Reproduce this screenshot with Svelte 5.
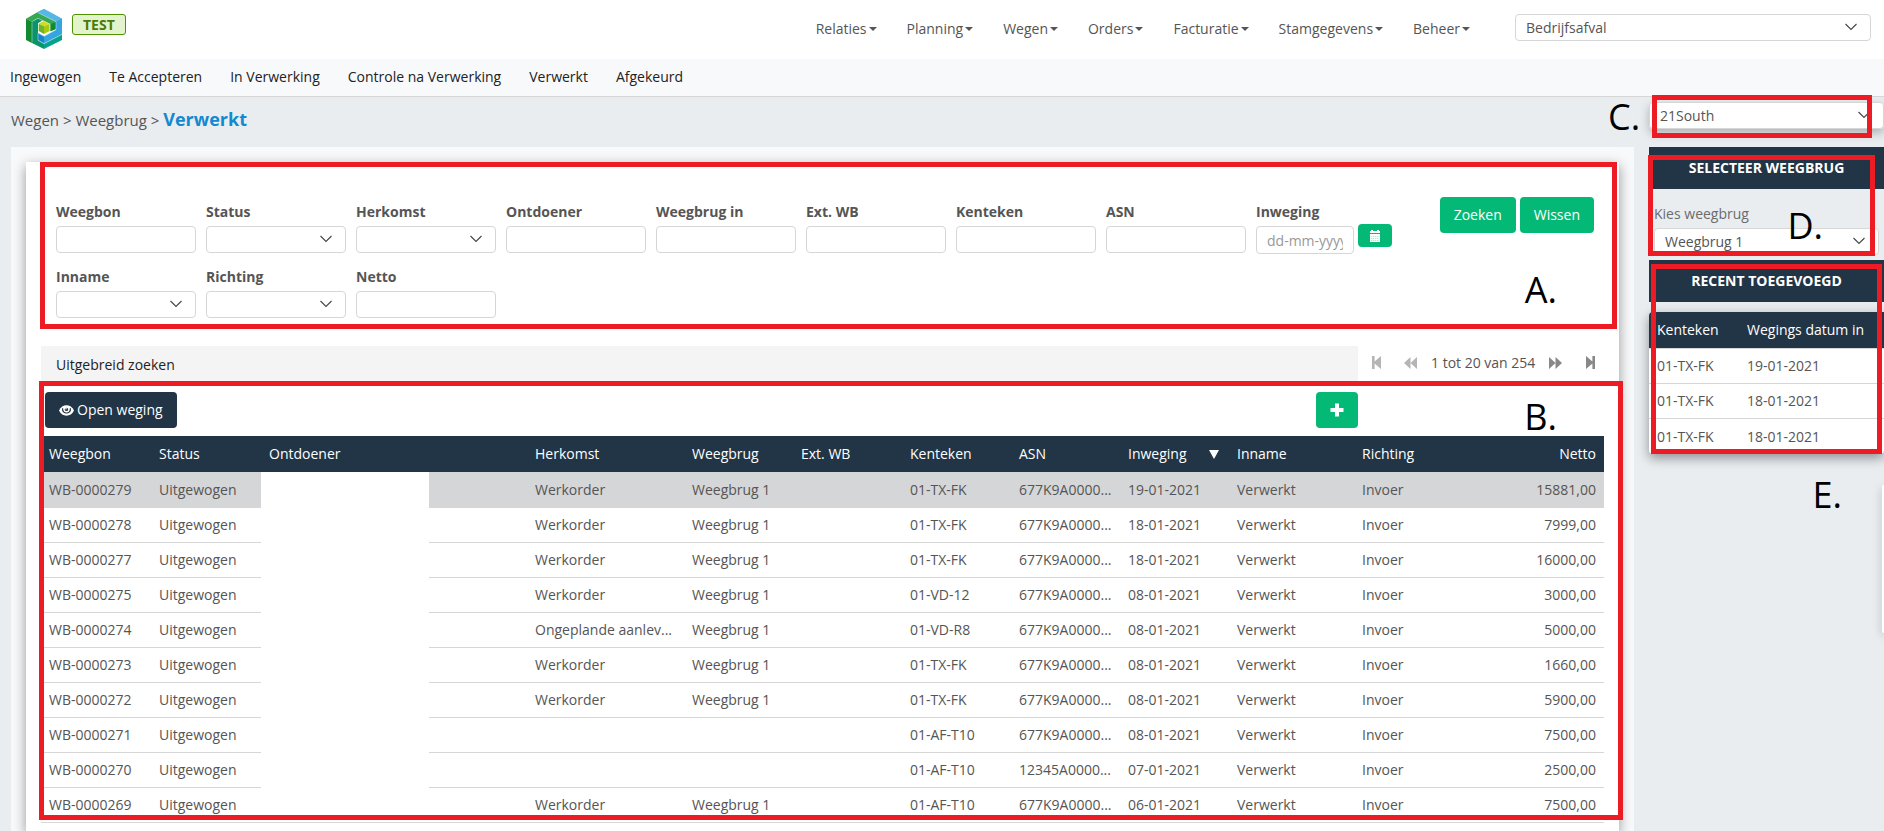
<script lang="ts">
	type Weging = {
		bon: string;
		herkomst: string;
		weegbrug: string;
		kenteken: string;
		asn: string;
		datum: string;
		netto: string;
	};

	type Filter = { id: string; label: string; kind: 'text' | 'select' | 'date' };

	const menu = ['Relaties', 'Planning', 'Wegen', 'Orders', 'Facturatie', 'Stamgegevens', 'Beheer'];

	const tabs = [
		'Ingewogen',
		'Te Accepteren',
		'In Verwerking',
		'Controle na Verwerking',
		'Verwerkt',
		'Afgekeurd'
	];

	const filters: Filter[] = [
		{ id: 'weegbon', label: 'Weegbon', kind: 'text' },
		{ id: 'status', label: 'Status', kind: 'select' },
		{ id: 'herkomst', label: 'Herkomst', kind: 'select' },
		{ id: 'ontdoener', label: 'Ontdoener', kind: 'text' },
		{ id: 'weegbrug-in', label: 'Weegbrug in', kind: 'text' },
		{ id: 'ext-wb', label: 'Ext. WB', kind: 'text' },
		{ id: 'kenteken', label: 'Kenteken', kind: 'text' },
		{ id: 'asn', label: 'ASN', kind: 'text' },
		{ id: 'inweging', label: 'Inweging', kind: 'date' },
		{ id: 'inname', label: 'Inname', kind: 'select' },
		{ id: 'richting', label: 'Richting', kind: 'select' },
		{ id: 'netto', label: 'Netto', kind: 'text' }
	];

	function weging(
		nr: number,
		herkomst: string,
		kenteken: string,
		datum: string,
		netto: string,
		asn = '677K9A0000...'
	): Weging {
		return {
			bon: `WB-0000${nr}`,
			herkomst,
			weegbrug: herkomst ? 'Weegbrug 1' : '',
			kenteken,
			asn,
			datum,
			netto
		};
	}

	const wegingen = [
		weging(279, 'Werkorder', '01-TX-FK', '19-01-2021', '15881,00'),
		weging(278, 'Werkorder', '01-TX-FK', '18-01-2021', '7999,00'),
		weging(277, 'Werkorder', '01-TX-FK', '18-01-2021', '16000,00'),
		weging(275, 'Werkorder', '01-VD-12', '08-01-2021', '3000,00'),
		weging(274, 'Ongeplande aanlev...', '01-VD-R8', '08-01-2021', '5000,00'),
		weging(273, 'Werkorder', '01-TX-FK', '08-01-2021', '1660,00'),
		weging(272, 'Werkorder', '01-TX-FK', '08-01-2021', '5900,00'),
		weging(271, '', '01-AF-T10', '08-01-2021', '7500,00'),
		weging(270, '', '01-AF-T10', '07-01-2021', '2500,00', '12345A0000...'),
		weging(269, 'Werkorder', '01-AF-T10', '06-01-2021', '7500,00')
	];

	const recent = [
		{ kenteken: '01-TX-FK', datum: '19-01-2021' },
		{ kenteken: '01-TX-FK', datum: '18-01-2021' },
		{ kenteken: '01-TX-FK', datum: '18-01-2021' }
	];

	let selected = $state('WB-0000279');
</script>

{#snippet chevron()}
	<svg class="chevron" width="12" height="8" viewBox="0 0 12 8" aria-hidden="true">
		<path d="M0.5 1 L6 6.5 L11.5 1" fill="none" stroke="#444" stroke-width="1.1" />
	</svg>
{/snippet}

<div class="page">
	<header class="topbar">
		<svg class="logo" width="36" height="40" viewBox="0 0 108 120" role="img" aria-label="Logo">
			<path d="M54 0 L108 29 V76 L54 104 L36 94 V72 L54 82 L90 62 V38 L34 10 Z" fill="#35a5e0" />
			<path d="M54 0 L108 29 L90 38 L34 10 Z" fill="#55b7e6" />
			<path d="M0 29 L34 10 L90 38 V60 L73 67 V46 L36 27 L18 38 Z" fill="#36a852" />
			<path d="M73 46 L90 38 V60 L73 67 Z" fill="#138a2e" />
			<path d="M0 29 L18 38 V102 L0 93 Z" fill="#138a2e" />
			<path d="M18 38 L36 27 L50 34 L36 43 V94 L54 104 V120 L18 102 Z" fill="#0a9468" />
			<path d="M54 104 L108 76 V93 L54 120 Z" fill="#07a28c" />
			<path d="M36 72 L54 82 V102 L36 92 Z" fill="#1682d0" />
			<path d="M38 44 L54 35 L71 44 L54 52 Z" fill="#d3dc1c" />
			<path d="M38 44 L54 52 V75 L38 66 Z" fill="#6fb52c" />
			<path d="M54 52 L71 44 V66 L54 75 Z" fill="#a9c90e" />
			<path
				d="M18 40 V100 M20 37 L36 28 L72 46 V67 M36 11 L90 38 V62 L54 82 L36 72 V94 L54 104 L108 76"
				fill="none"
				stroke="#dff2ea"
				stroke-opacity="0.7"
				stroke-width="2"
			/>
		</svg>
		<span class="env">TEST</span>
		<nav class="menu">
			{#each menu as item (item)}
				<button type="button">{item}<i class="caret"></i></button>
			{/each}
		</nav>
		<div class="select company">
			<select aria-label="Bedrijfsonderdeel">
				<option>Bedrijfsafval</option>
			</select>
			{@render chevron()}
		</div>
	</header>

	<nav class="tabs">
		{#each tabs as tab (tab)}
			<a href="#{tab.toLowerCase().replaceAll(' ', '-')}">{tab}</a>
		{/each}
	</nav>

	<div class="layout">
		<main>
			<div class="crumbs">Wegen &gt; Weegbrug &gt; <strong>Verwerkt</strong></div>
			<div class="panel">
				<section class="card">
					<form class="filters" onsubmit={(e) => e.preventDefault()}>
						<div class="fields">
							{#each filters as filter (filter.id)}
								<div class="field">
									<label for={filter.id}>{filter.label}</label>
									{#if filter.kind === 'select'}
										<div class="select">
											<select id={filter.id}><option></option></select>
											{@render chevron()}
										</div>
									{:else if filter.kind === 'date'}
										<div class="date">
											<input id={filter.id} type="text" placeholder="dd-mm-yyyy" />
											<button type="button" class="green calendar" aria-label="Kalender">
												<svg width="12" height="12" viewBox="0 0 12 12">
													<path
														d="M1 1 H2 V0 H4 V1 H8 V0 H10 V1 H11 V3 H1 Z M1 4 H11 V12 H1 Z"
														fill="#fff"
													/>
													<path
														d="M2 6.5 H10 M2 8.5 H10 M2 10.5 H10"
														stroke="#8fdcbe"
														stroke-width="0.7"
														stroke-dasharray="1.4 0.6"
													/>
												</svg>
											</button>
										</div>
									{:else}
										<input id={filter.id} type="text" />
									{/if}
								</div>
							{/each}
						</div>
						<div class="submit">
							<button type="submit" class="btn green">Zoeken</button>
							<button type="reset" class="btn green">Wissen</button>
						</div>
					</form>

					<div class="extra">
						<button type="button" class="extended">Uitgebreid zoeken</button>
						<div class="pager">
							<button type="button" class="off far" aria-label="Eerste">
								<svg width="9" height="13" viewBox="0 0 9 13">
									<path d="M0 0 H2.6 V5.6 L9 0 V13 L2.6 7.4 V13 H0 Z" />
								</svg>
							</button>
							<button type="button" class="off" aria-label="Vorige">
								<svg width="13" height="12" viewBox="0 0 13 12">
									<path d="M6.5 0 V12 L0 6 Z M13 0 V12 L6.5 6 Z" />
								</svg>
							</button>
							<span>1 tot 20 van 254</span>
							<button type="button" aria-label="Volgende">
								<svg width="13" height="12" viewBox="0 0 13 12">
									<path d="M0 0 L6.5 6 L0 12 Z M6.5 0 L13 6 L6.5 12 Z" />
								</svg>
							</button>
							<button type="button" class="last" aria-label="Laatste">
								<svg width="9" height="13" viewBox="0 0 9 13">
									<path d="M9 0 H6.4 V5.6 L0 0 V13 L6.4 7.4 V13 H9 Z" />
								</svg>
							</button>
						</div>
					</div>

					<div class="toolbar">
						<button type="button" class="btn dark">
							<svg width="15" height="11" viewBox="0 0 15 11" aria-hidden="true">
								<path
									d="M0 5.5 C3 -1.4 12 -1.4 15 5.5 C12 12.4 3 12.4 0 5.5 Z"
									fill="#fff"
								/>
								<path
									d="M3.6 3.2 C2.8 9.6 12.2 9.6 11.4 3.2"
									fill="none"
									stroke="#213546"
									stroke-width="1.2"
								/>
								<circle cx="7.5" cy="4.4" r="1.7" fill="#213546" />
								<circle cx="7" cy="3.8" r="0.8" fill="#fff" />
							</svg>
							Open weging
						</button>
						<button type="button" class="btn green plus" aria-label="Toevoegen">
							<svg width="14" height="14" viewBox="0 0 14 14">
								<path d="M7 0.5 V13.5 M0.5 7 H13.5" stroke="#fff" stroke-width="4" />
							</svg>
						</button>
					</div>

					<div class="table-wrap">
						<table class="wegingen">
							<colgroup>
								<col class="w-bon" />
								<col class="w-bon" />
								<col class="w-ontdoener" />
								<col class="w-herkomst" />
								<col class="w-std" />
								<col class="w-std" />
								<col class="w-std" />
								<col class="w-std" />
								<col class="w-std" />
								<col class="w-inname" />
								<col />
							</colgroup>
							<thead>
								<tr>
									<th>Weegbon</th>
									<th>Status</th>
									<th>Ontdoener</th>
									<th>Herkomst</th>
									<th>Weegbrug</th>
									<th>Ext. WB</th>
									<th>Kenteken</th>
									<th>ASN</th>
									<th><span class="sorted">Inweging <i class="desc"></i></span></th>
									<th>Inname</th>
									<th class="split"><span>Richting</span><span>Netto</span></th>
								</tr>
							</thead>
							<tbody>
								{#each wegingen as row (row.bon)}
									<tr class:selected={row.bon === selected} onclick={() => (selected = row.bon)}>
										<td>{row.bon}</td>
										<td>Uitgewogen</td>
										<td></td>
										<td>{row.herkomst}</td>
										<td>{row.weegbrug}</td>
										<td></td>
										<td>{row.kenteken}</td>
										<td>{row.asn}</td>
										<td>{row.datum}</td>
										<td>Verwerkt</td>
										<td class="split"><span>Invoer</span><span>{row.netto}</span></td>
									</tr>
								{/each}
							</tbody>
						</table>
						<div class="blank"></div>
					</div>
				</section>
			</div>
			<div class="mark mark-a"><b>A.</b></div>
			<div class="mark mark-b"><b>B.</b></div>
		</main>

		<aside>
			<div class="select location">
				<select aria-label="Locatie">
					<option>21South</option>
				</select>
				{@render chevron()}
			</div>

			<h2>SELECTEER WEEGBRUG</h2>
			<div class="bridge">
				<label for="weegbrug">Kies weegbrug</label>
				<div class="select">
					<select id="weegbrug">
						<option>Weegbrug 1</option>
					</select>
					{@render chevron()}
				</div>
			</div>

			<h2>RECENT TOEGEVOEGD</h2>
			<table class="recent">
				<thead>
					<tr>
						<th>Kenteken</th>
						<th>Wegings datum in</th>
					</tr>
				</thead>
				<tbody>
					{#each recent as row, i (i)}
						<tr>
							<td>{row.kenteken}</td>
							<td>{row.datum}</td>
						</tr>
					{/each}
				</tbody>
			</table>
			<div class="drawer"></div>
			<div class="mark mark-c"><b>C.</b></div>
			<div class="mark mark-d"><b>D.</b></div>
			<div class="mark mark-e"><b>E.</b></div>
		</aside>
	</div>
</div>

<style>
	:global(body) {
		overflow: hidden;
	}

	.page {
		display: flex;
		flex-direction: column;
		min-height: 100vh;
		background: #e9edf0;
		color: #555;
		font-family: 'Open Sans', 'Noto Sans', sans-serif;
		font-size: 14px;
		line-height: 20px;
		overflow: hidden;
	}

	.page *,
	.page {
		box-sizing: border-box;
	}

	button,
	input,
	select {
		margin: 0;
		padding: 0;
		border: 0;
		background: none;
		color: inherit;
		font: inherit;
	}

	input,
	select {
		display: block;
		width: 100%;
		height: 27px;
		padding: 0 10px;
		border: 1px solid #d6d6d6;
		border-radius: 4px;
		background: #fff;
		appearance: none;
	}

	input::placeholder {
		color: #999;
	}

	.select {
		position: relative;
	}

	.chevron {
		position: absolute;
		top: 9px;
		right: 14px;
		pointer-events: none;
	}

	.topbar {
		display: flex;
		align-items: flex-start;
		height: 59px;
		padding: 0 13px 0 26px;
		background: #fff;
	}

	.logo {
		margin-top: 9px;
	}

	.env {
		margin: 14px 0 0 10px;
		padding: 0 10px;
		border: 1px solid #4f9400;
		border-radius: 3px;
		background: #e3f3cc;
		color: #487c0c;
		font-weight: 700;
		line-height: 19px;
	}

	.menu {
		display: flex;
		gap: 30px;
		margin: 19px 45px 0 auto;
	}

	.menu button {
		display: flex;
		align-items: center;
		gap: 2px;
	}

	.caret {
		border: 4px solid transparent;
		border-top-color: #555;
		border-bottom: 0;
	}

	.company {
		width: 356px;
		margin-top: 14px;
	}

	.tabs {
		display: flex;
		gap: 28px;
		height: 38px;
		padding: 8px 10px;
		border-bottom: 1px solid #d6d6d6;
		background: #f8f9fb;
	}

	.tabs a {
		color: #222;
		text-decoration: none;
	}

	.layout {
		display: flex;
		flex: 1;
		gap: 15px;
		padding-left: 11px;
	}

	main {
		position: relative;
		display: flex;
		flex: 1;
		flex-direction: column;
		min-width: 0;
	}

	.crumbs {
		height: 50px;
		padding-top: 12px;
		font-size: 15px;
	}

	.crumbs strong {
		color: #1489cf;
		font-size: 18px;
	}

	.panel {
		display: flex;
		flex: 1;
		padding: 15px 15px 0;
		background: #f8f9fb;
		overflow: hidden;
	}

	.card {
		flex: 1;
		min-width: 0;
		padding: 35px 15px 0;
		background: #fff;
		box-shadow: 0 4px 12px rgba(0, 0, 0, 0.4);
	}

	.filters {
		display: flex;
		justify-content: space-between;
		padding: 0 10px 0 15px;
	}

	.fields {
		display: grid;
		grid-template-columns: repeat(9, 140px);
		gap: 14px 10px;
		padding-top: 5px;
	}

	.field {
		height: 51px;
	}

	.field label {
		display: block;
		margin-bottom: 4px;
		font-weight: 700;
	}

	.date {
		display: flex;
		gap: 4px;
	}

	.date input {
		width: 98px;
		height: 28px;
	}

	.green {
		border-radius: 4px;
		background: #04b976;
		color: #fff;
	}

	.calendar {
		display: flex;
		align-items: center;
		justify-content: center;
		width: 34px;
		height: 23px;
		margin-top: -2px;
	}

	.submit {
		display: flex;
		align-items: flex-start;
		gap: 4px;
	}

	.btn {
		display: flex;
		align-items: center;
		height: 36px;
		padding: 0 14px;
		border-radius: 4px;
	}

	.dark {
		gap: 3px;
		background: #213546;
		color: #fff;
	}

	.extra {
		display: flex;
		margin-top: 28px;
	}

	.extended {
		flex: 1;
		height: 35px;
		padding: 2px 15px 0;
		background: #f4f4f4;
		color: #222;
		text-align: left;
	}

	.pager {
		display: flex;
		align-items: center;
		gap: 14px;
		width: 246px;
		height: 33px;
		padding: 0 9px 0 14px;
	}

	.pager button {
		display: flex;
	}

	.pager .far {
		margin-right: 9px;
	}

	.pager .last {
		margin-left: auto;
	}

	.pager svg {
		fill: #888;
	}

	.pager .off svg {
		fill: #b5b5b5;
	}

	.toolbar {
		display: flex;
		justify-content: space-between;
		padding: 11px 246px 8px 4px;
	}

	table {
		width: 100%;
		border-collapse: separate;
		border-spacing: 0;
		table-layout: fixed;
	}

	th,
	td {
		height: 35px;
		padding: 0 8px;
		border-bottom: 1px solid #d6d6d6;
		text-align: left;
		white-space: nowrap;
	}

	th {
		height: 36px;
		border-bottom: 0;
		background: #213546;
		color: #fff;
		font-weight: 500;
	}

	.selected td {
		height: 36px;
		border-bottom-color: #d5d6d7;
		background: #d5d6d7;
	}

	.split span:last-child {
		float: right;
	}

	.sorted {
		display: flex;
		align-items: center;
		justify-content: space-between;
		padding-right: 2px;
	}

	.desc {
		border: 5px solid transparent;
		border-top: 9px solid #fff;
		border-bottom: 0;
	}

	.w-bon {
		width: 110px;
	}

	.w-ontdoener {
		width: 266px;
	}

	.w-herkomst {
		width: 157px;
	}

	.w-std {
		width: 109px;
	}

	.w-inname {
		width: 125px;
	}

	.table-wrap {
		position: relative;
	}

	.blank {
		position: absolute;
		top: 36px;
		bottom: 3px;
		left: 220px;
		width: 168px;
		background: #fff;
	}

	aside {
		position: relative;
		width: 235px;
	}

	.location {
		margin: 5px 0 18px;
		border-radius: 4px;
		box-shadow: 0 4px 10px rgba(0, 0, 0, 0.25);
	}

	h2 {
		margin: 0;
		background: #213546;
		color: #fff;
		font-size: 14px;
		font-weight: 700;
		line-height: 42px;
		text-align: center;
	}

	.bridge {
		padding: 15px 5px 5px;
	}

	.bridge label {
		display: block;
		margin-bottom: 4px;
		color: #6b6b6b;
		font-weight: 500;
	}

	.recent {
		margin-top: 10px;
		border-radius: 4px;
		background: #fff;
		box-shadow: 0 4px 12px rgba(0, 0, 0, 0.4);
	}

	.recent th:first-child {
		width: 90px;
		border-top-left-radius: 4px;
	}

	.recent th {
		border-bottom: 1px solid #d6d6d6;
		height: 37px;
	}

	.recent tr:last-child td {
		border-bottom: 0;
	}

	.recent thead tr:last-child th {
		border-bottom: 1px solid #d6d6d6;
	}

	.drawer {
		position: absolute;
		top: 388px;
		right: 0;
		width: 2px;
		height: 148px;
		border-radius: 4px 0 0 4px;
		background: #fff;
		box-shadow: 0 3px 8px rgba(0, 0, 0, 0.4);
	}

	/* lettered callouts over the screen areas */
	.mark {
		position: absolute;
		border: 5px solid #ed1c24;
		pointer-events: none;
	}

	.mark b {
		position: absolute;
		color: #000;
		font-size: 36px;
		font-weight: 400;
		line-height: 40px;
		white-space: nowrap;
	}

	.mark-a {
		top: 65px;
		right: 17px;
		left: 29px;
		height: 167px;
	}

	.mark-a b {
		right: 55px;
		bottom: 14px;
	}

	.mark-b {
		top: 284px;
		right: 11px;
		left: 28px;
		height: 439px;
	}

	.mark-b b {
		top: 11px;
		right: 61px;
	}

	.mark-c {
		top: -2px;
		right: 12px;
		left: 3px;
		height: 43px;
	}

	.mark-c b {
		top: -3px;
		left: -49px;
	}

	.mark-d {
		top: 58px;
		right: 9px;
		left: -1px;
		height: 101px;
	}

	.mark-d b {
		top: 46px;
		right: 47px;
	}

	.mark-e {
		top: 167px;
		right: 2px;
		left: 2px;
		height: 190px;
	}

	.mark-e b {
		top: 206px;
		right: 35px;
	}
</style>
